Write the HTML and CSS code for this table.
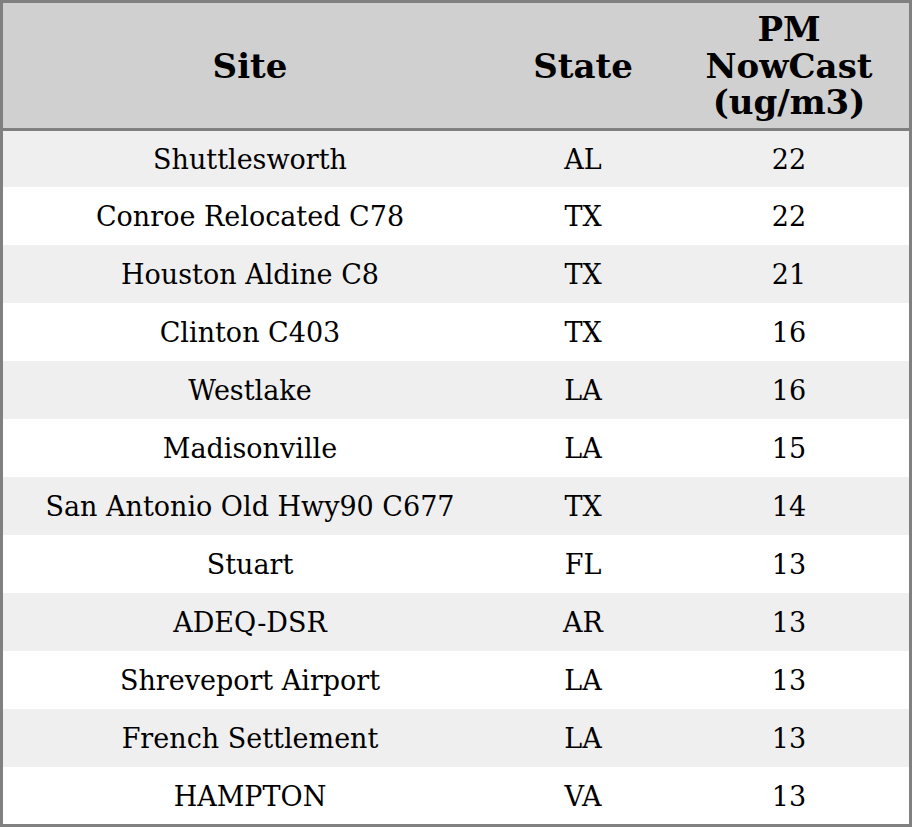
FILE: index.html
```html
<!DOCTYPE html>
<html>
<head>
<meta charset="utf-8">
<link rel="stylesheet" href="styles.css">
</head>
<body>
<table class="aq-table">
  <colgroup>
    <col class="col-site">
    <col class="col-state">
    <col class="col-pm">
  </colgroup>
  <thead>
    <tr>
      <th>Site</th>
      <th>State</th>
      <th>PM<br>NowCast<br>(ug/m3)</th>
    </tr>
  </thead>
  <tbody>
    <tr><td>Shuttlesworth</td><td>AL</td><td>22</td></tr>
    <tr><td>Conroe Relocated C78</td><td>TX</td><td>22</td></tr>
    <tr><td>Houston Aldine C8</td><td>TX</td><td>21</td></tr>
    <tr><td>Clinton C403</td><td>TX</td><td>16</td></tr>
    <tr><td>Westlake</td><td>LA</td><td>16</td></tr>
    <tr><td>Madisonville</td><td>LA</td><td>15</td></tr>
    <tr><td>San Antonio Old Hwy90 C677</td><td>TX</td><td>14</td></tr>
    <tr><td>Stuart</td><td>FL</td><td>13</td></tr>
    <tr><td>ADEQ-DSR</td><td>AR</td><td>13</td></tr>
    <tr><td>Shreveport Airport</td><td>LA</td><td>13</td></tr>
    <tr><td>French Settlement</td><td>LA</td><td>13</td></tr>
    <tr><td>HAMPTON</td><td>VA</td><td>13</td></tr>
  </tbody>
</table>
</body>
</html>
```

FILE: styles.css
```css
html, body {
  margin: 0;
  padding: 0;
  background: #ffffff;
}

.aq-table {
  width: 912px;
  height: 827px;
  box-sizing: border-box;
  table-layout: fixed;
  border-collapse: separate;
  border-spacing: 0;
  border: 3px solid #808080;
  font-family: "DejaVu Serif", serif;
  color: #000;
}

.col-site { width: 494px; }
.col-state { width: 172px; }
.col-pm { width: 240px; }

.aq-table th {
  height: 128px;
  box-sizing: border-box;
  padding: 1px 0 0;
  background: #d0d0d0;
  border-bottom: 3px solid #808080;
  font-size: 34px;
  font-weight: bold;
  line-height: 36.5px;
  text-align: center;
  vertical-align: middle;
}

.aq-table td {
  height: 58px;
  box-sizing: border-box;
  padding: 1px 0 0;
  font-size: 27px;
  text-align: center;
  vertical-align: middle;
}

.aq-table tbody tr:nth-child(odd) td {
  background: #efefef;
}

.aq-table tbody tr:first-child td {
  height: 56px;
}

.aq-table tbody tr:last-child td {
  height: 57px;
}
```
